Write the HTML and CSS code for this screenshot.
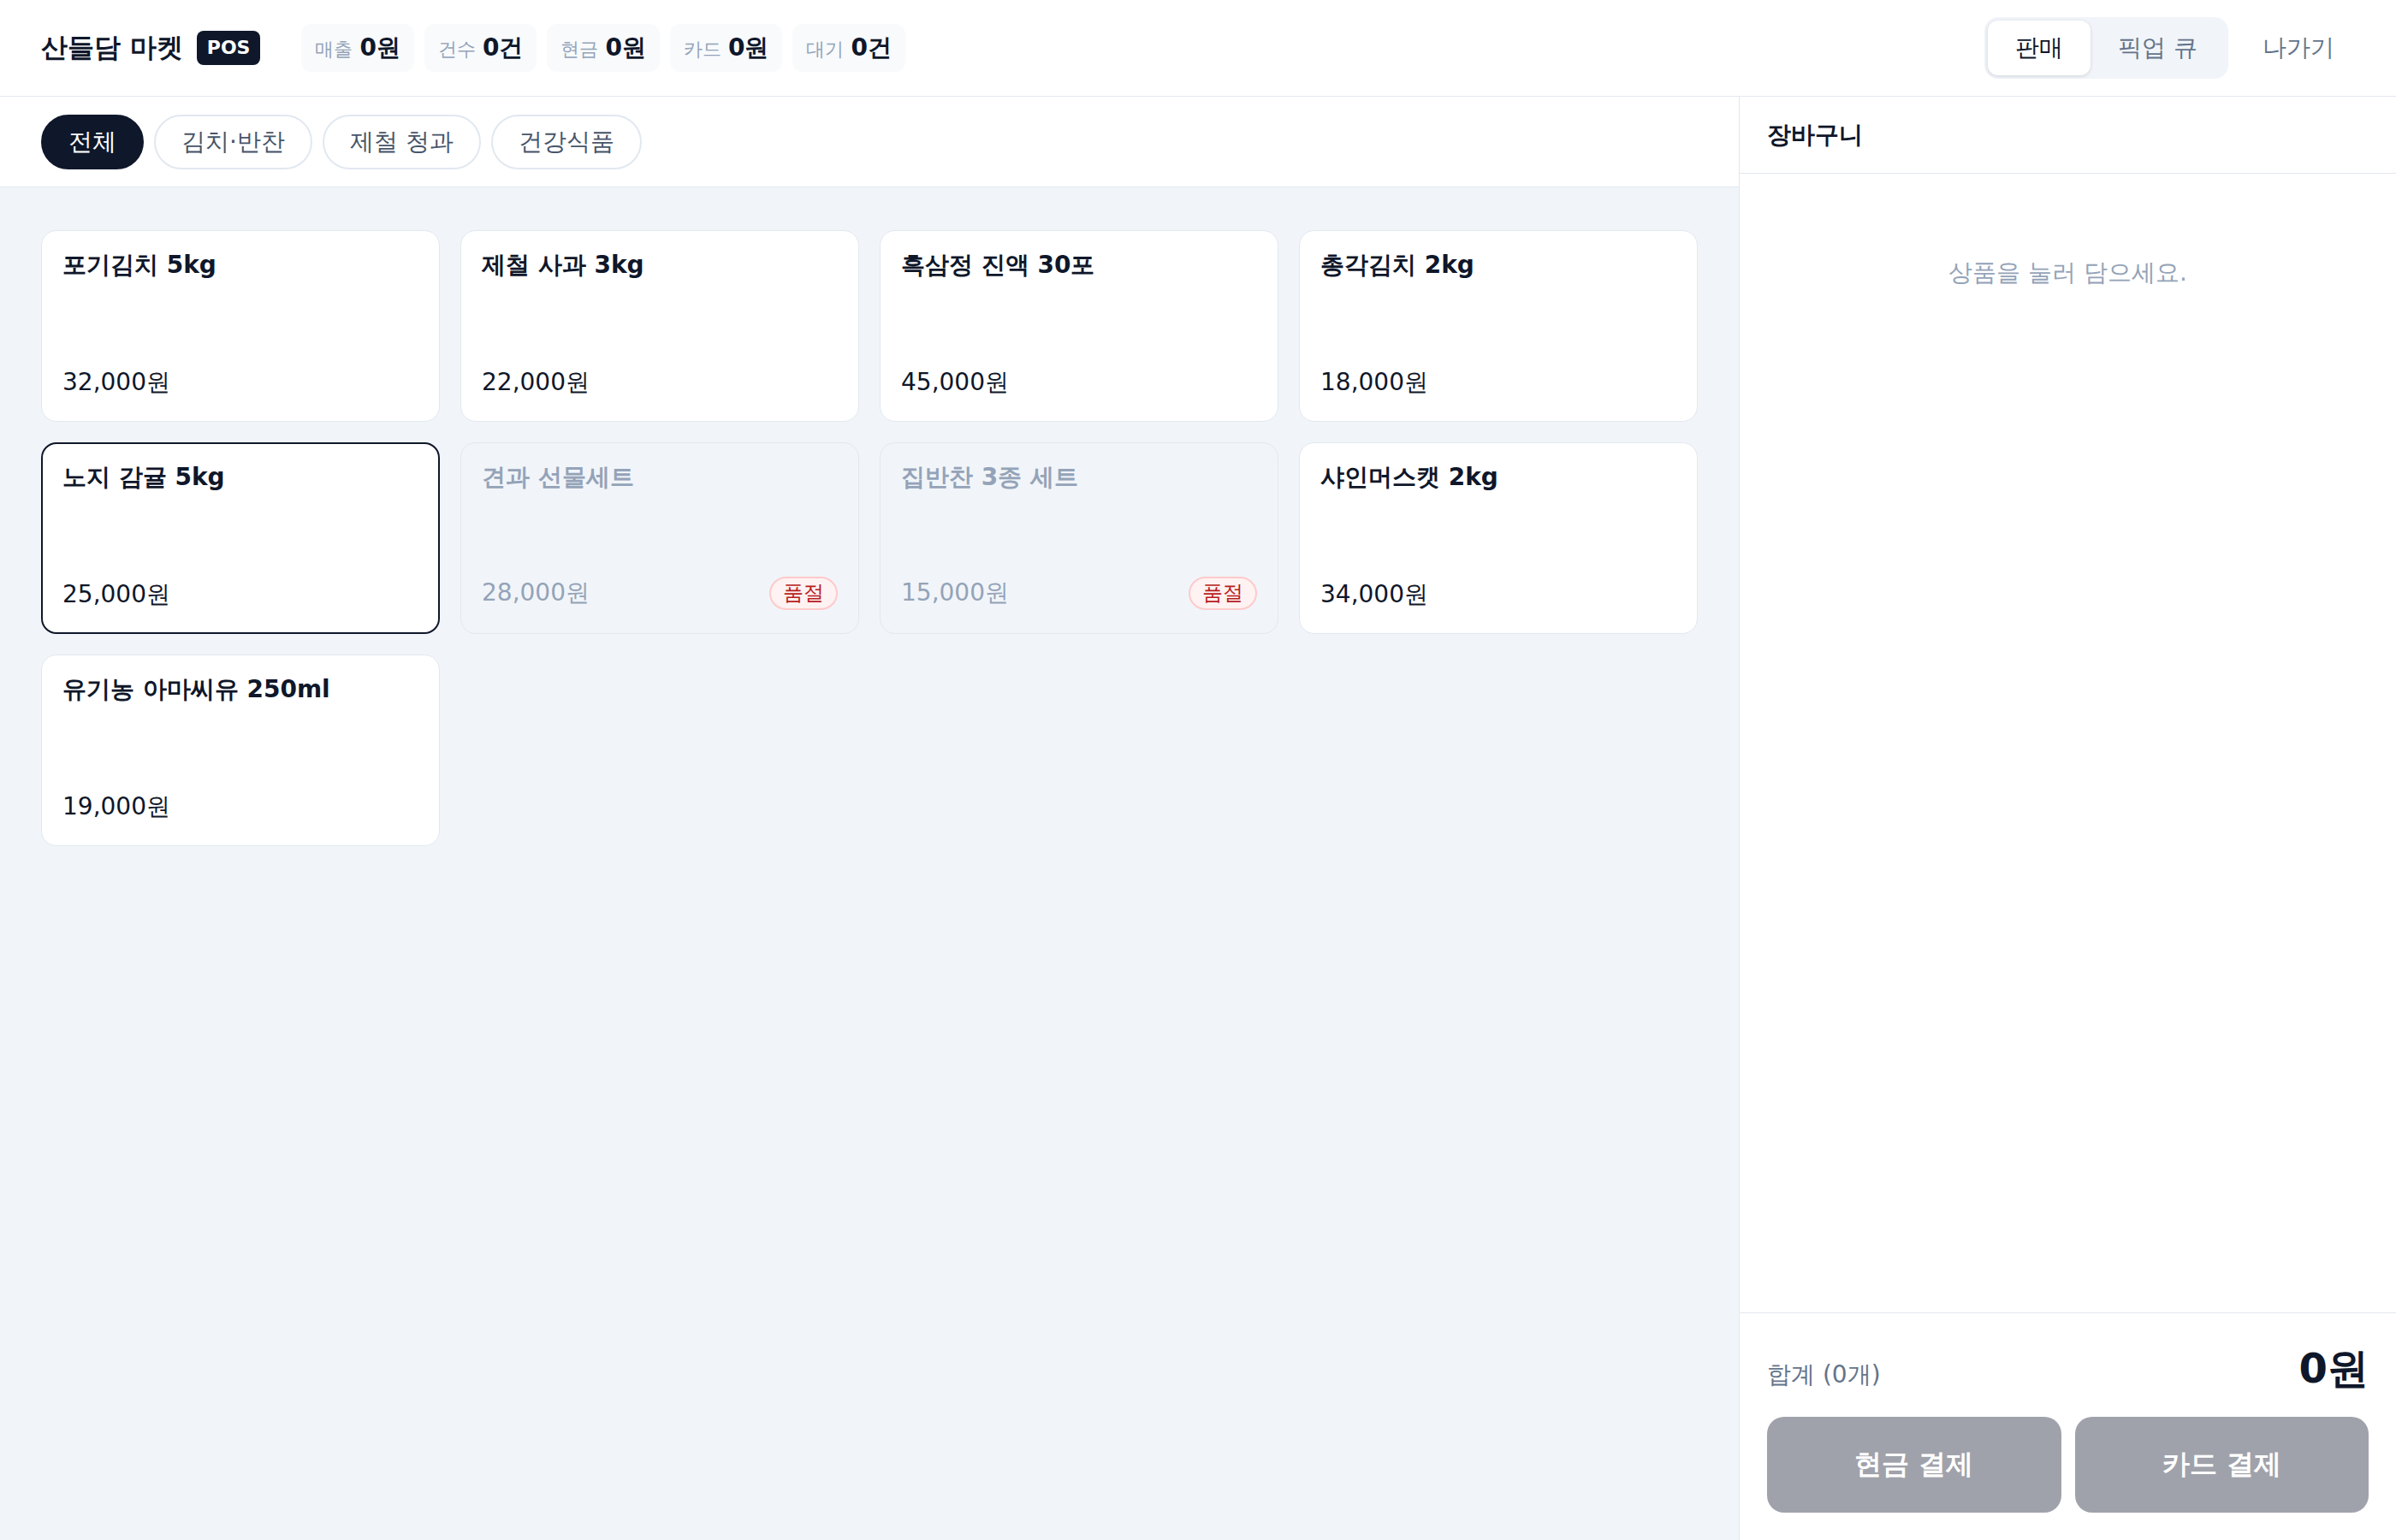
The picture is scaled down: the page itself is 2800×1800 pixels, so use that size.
FILE: index.html
```
<!doctype html>
<html lang="ko">
    <head>
        <meta charset="UTF-8" />
        <meta name="viewport" content="width=device-width, initial-scale=1.0" />
        <title>산들담 마켓 POS</title>
        <link rel="stylesheet" href="styles.css">
    </head>
    <body>
        <header class="topbar">
            <div class="brand">
                <span class="brand-name">산들담 마켓</span>
                <span class="brand-tag">POS</span>
            </div>
            <div class="stats">
                <div class="stat"><span class="stat-label">매출</span><span class="stat-value">0원</span></div>
                <div class="stat"><span class="stat-label">건수</span><span class="stat-value">0건</span></div>
                <div class="stat"><span class="stat-label">현금</span><span class="stat-value">0원</span></div>
                <div class="stat"><span class="stat-label">카드</span><span class="stat-value">0원</span></div>
                <div class="stat"><span class="stat-label">대기</span><span class="stat-value">0건</span></div>
            </div>
            <div class="topbar-actions">
                <div class="segment">
                    <button class="segment-btn active" type="button">판매</button>
                    <button class="segment-btn" type="button">픽업 큐</button>
                </div>
                <button class="exit-btn" type="button">나가기</button>
            </div>
        </header>

        <div class="main">
            <section class="catalog">
                <!-- Category filter -->
                <nav class="categories">
                    <button class="pill active" type="button">전체</button>
                    <button class="pill" type="button">김치·반찬</button>
                    <button class="pill" type="button">제철 청과</button>
                    <button class="pill" type="button">건강식품</button>
                </nav>

                <!-- Products -->
                <div class="products">
                    <button class="product" type="button">
                        <span class="product-name">포기김치 5kg</span>
                        <span class="product-foot"><span class="product-price">32,000원</span></span>
                    </button>
                    <button class="product" type="button">
                        <span class="product-name">제철 사과 3kg</span>
                        <span class="product-foot"><span class="product-price">22,000원</span></span>
                    </button>
                    <button class="product" type="button">
                        <span class="product-name">흑삼정 진액 30포</span>
                        <span class="product-foot"><span class="product-price">45,000원</span></span>
                    </button>
                    <button class="product" type="button">
                        <span class="product-name">총각김치 2kg</span>
                        <span class="product-foot"><span class="product-price">18,000원</span></span>
                    </button>
                    <button class="product selected" type="button">
                        <span class="product-name">노지 감귤 5kg</span>
                        <span class="product-foot"><span class="product-price">25,000원</span></span>
                    </button>
                    <button class="product soldout" type="button" disabled>
                        <span class="product-name">견과 선물세트</span>
                        <span class="product-foot"><span class="product-price">28,000원</span><span class="badge">품절</span></span>
                    </button>
                    <button class="product soldout" type="button" disabled>
                        <span class="product-name">집반찬 3종 세트</span>
                        <span class="product-foot"><span class="product-price">15,000원</span><span class="badge">품절</span></span>
                    </button>
                    <button class="product" type="button">
                        <span class="product-name">샤인머스캣 2kg</span>
                        <span class="product-foot"><span class="product-price">34,000원</span></span>
                    </button>
                    <button class="product" type="button">
                        <span class="product-name">유기농 아마씨유 250ml</span>
                        <span class="product-foot"><span class="product-price">19,000원</span></span>
                    </button>
                </div>
            </section>

            <aside class="cart">
                <div class="cart-header">장바구니</div>
                <div class="cart-body">
                    <p class="cart-empty">상품을 눌러 담으세요.</p>
                </div>
                <div class="cart-footer">
                    <div class="cart-total">
                        <span class="total-label">합계 (0개)</span>
                        <span class="total-value">0원</span>
                    </div>
                    <div class="pay-buttons">
                        <button class="pay-btn" type="button" disabled>현금 결제</button>
                        <button class="pay-btn" type="button" disabled>카드 결제</button>
                    </div>
                </div>
            </aside>
        </div>
    </body>
</html>
```

FILE: styles.css
```
* {
    box-sizing: border-box;
}
body {
    margin: 0;
    height: 100vh;
    display: flex;
    flex-direction: column;
    font-family: "DejaVu Sans", sans-serif;
    line-height: 1.4;
    color: #0f172a;
    background: #fff;
}
button {
    font-family: inherit;
    cursor: pointer;
}

/* Top bar */
.topbar {
    height: 113px;
    flex: 0 0 auto;
    display: flex;
    align-items: center;
    gap: 48px;
    padding: 0 48px;
    border-bottom: 1px solid #e2e8f0;
}
.brand {
    display: flex;
    align-items: center;
    gap: 16px;
}
.brand-name {
    font-size: 31px;
    font-weight: bold;
}
.brand-tag {
    background: #0f172a;
    color: #fff;
    font-size: 22px;
    font-weight: bold;
    height: 40px;
    line-height: 40px;
    padding: 0 12px;
    border-radius: 8px;
}
.stats {
    display: flex;
    gap: 12px;
}
.stat {
    display: flex;
    align-items: baseline;
    gap: 8px;
    height: 56px;
    padding: 0 16px;
    line-height: 56px;
    background: #f8fafc;
    border-radius: 12px;
}
.stat-label {
    font-size: 22px;
    color: #94a3b8;
}
.stat-value {
    font-size: 28px;
    font-weight: bold;
}
.topbar-actions {
    margin-left: auto;
    display: flex;
    align-items: center;
    gap: 16px;
}
.segment {
    display: flex;
    padding: 4px;
    background: #f1f5f9;
    border-radius: 16px;
}
.segment-btn {
    height: 64px;
    padding: 0 32px;
    border: none;
    background: none;
    border-radius: 12px;
    font-size: 28px;
    color: #64748b;
}
.segment-btn.active {
    background: #fff;
    color: #0f172a;
    box-shadow: 0 1px 4px rgba(15, 23, 42, 0.15);
}
.exit-btn {
    height: 64px;
    padding: 0 24px;
    border: none;
    background: none;
    font-size: 28px;
    color: #64748b;
}

/* Main area */
.main {
    flex: 1;
    display: flex;
    min-height: 0;
}
.catalog {
    flex: 1;
    display: flex;
    flex-direction: column;
    background: #f1f5f9;
}
.categories {
    display: flex;
    gap: 12px;
    padding: 21px 48px 20px;
    background: #fff;
    border-bottom: 1px solid #e2e8f0;
}
.pill {
    height: 64px;
    padding: 0 30px;
    border: 2px solid #e2e8f0;
    border-radius: 32px;
    background: #fff;
    font-size: 28px;
    color: #475569;
}
.pill.active {
    background: #0f172a;
    border-color: #0f172a;
    color: #fff;
}
.products {
    display: grid;
    grid-template-columns: repeat(4, 1fr);
    grid-auto-rows: 224px;
    gap: 24px;
    padding: 50px 48px;
}
.product {
    display: flex;
    flex-direction: column;
    justify-content: space-between;
    text-align: left;
    padding: 22px 24px 27px;
    background: #fff;
    border: 1px solid #e2e8f0;
    border-radius: 18px;
    color: #0f172a;
    font-size: 28px;
    line-height: 1.3;
}
.product.selected {
    border: 2px solid #0f172a;
    padding: 21px 23px 26px;
}
.product.soldout {
    background: #f1f5f9;
    color: #94a3b8;
    cursor: default;
}
.product-name {
    font-weight: bold;
}
.product-foot {
    display: flex;
    align-items: center;
    justify-content: space-between;
}
.badge {
    font-size: 24px;
    line-height: 35px;
    padding: 0 14px;
    color: #b91c1c;
    background: #fef2f2;
    border: 2px solid #fecaca;
    border-radius: 20px;
}

/* Cart */
.cart {
    width: 768px;
    display: flex;
    flex-direction: column;
    border-left: 1px solid #e2e8f0;
}
.cart-header {
    height: 90px;
    display: flex;
    align-items: center;
    padding: 0 32px;
    font-size: 28px;
    font-weight: bold;
    border-bottom: 1px solid #e2e8f0;
}
.cart-body {
    flex: 1;
    padding: 96px 32px;
}
.cart-empty {
    margin: 0;
    text-align: center;
    font-size: 28px;
    color: #94a3b8;
}
.cart-footer {
    padding: 36px 32px 32px;
    border-top: 1px solid #e2e8f0;
}
.cart-total {
    display: flex;
    align-items: baseline;
    justify-content: space-between;
    margin-bottom: 28px;
}
.total-label {
    font-size: 28px;
    color: #64748b;
}
.total-value {
    font-size: 48px;
    line-height: 57px;
    font-weight: bold;
}
.pay-buttons {
    display: grid;
    grid-template-columns: 1fr 1fr;
    gap: 16px;
}
.pay-btn {
    height: 112px;
    border: none;
    border-radius: 20px;
    background: #a0a2ab;
    color: #fff;
    font-size: 32px;
    font-weight: bold;
    cursor: not-allowed;
}
```
